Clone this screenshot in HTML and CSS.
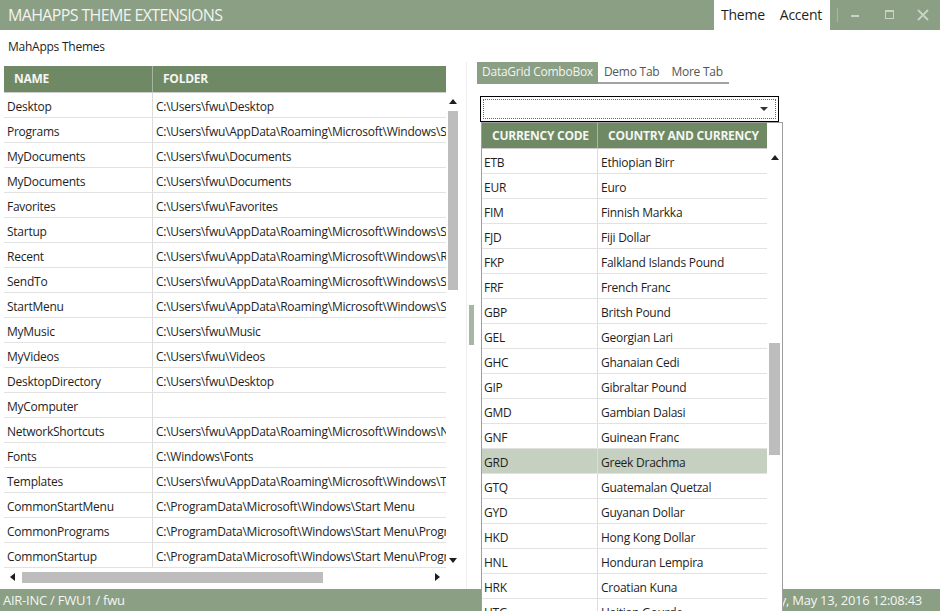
FILE: index.html
```html
<!DOCTYPE html>
<html>
<head>
<meta charset="utf-8">
<link rel="stylesheet" href="styles.css">
</head>
<body>
<div class="window">
  <div class="titlebar">
    <div class="title">MAHAPPS THEME EXTENSIONS</div>
    <div class="cmds"><span>Theme</span><span>Accent</span></div>
    <div class="sep"></div>
    <div class="wbtn"><svg width="12" height="12" viewBox="0 0 12 12"><rect x="2" y="6" width="8" height="2" fill="#c9d3c6"/></svg></div>
    <div class="wbtn"><svg width="12" height="12" viewBox="0 0 12 12"><rect x="2.5" y="1.5" width="8" height="8" fill="none" stroke="#c9d3c6" stroke-width="1"/><rect x="2" y="1" width="9" height="2" fill="#c9d3c6"/></svg></div>
    <div class="wbtn"><svg width="12" height="12" viewBox="0 0 12 12"><path d="M1 1 L11 11 M11 1 L1 11" stroke="#c9d3c6" stroke-width="1.8"/></svg></div>
  </div>
  <div class="content">
    <div class="subtitle">MahApps Themes</div>
    <div class="main">
      <div class="left">
        <div class="lhead">
          <div class="hc c1">NAME</div>
          <div class="hc c2">FOLDER</div>
        </div>
        <div class="lbody">
          <div class="lrows">
            <div class="row"><div class="c c1">Desktop</div><div class="c c2">C:\Users\fwu\Desktop</div></div>
            <div class="row"><div class="c c1">Programs</div><div class="c c2">C:\Users\fwu\AppData\Roaming\Microsoft\Windows\Start Menu\Programs</div></div>
            <div class="row"><div class="c c1">MyDocuments</div><div class="c c2">C:\Users\fwu\Documents</div></div>
            <div class="row"><div class="c c1">MyDocuments</div><div class="c c2">C:\Users\fwu\Documents</div></div>
            <div class="row"><div class="c c1">Favorites</div><div class="c c2">C:\Users\fwu\Favorites</div></div>
            <div class="row"><div class="c c1">Startup</div><div class="c c2">C:\Users\fwu\AppData\Roaming\Microsoft\Windows\Start Menu\Programs\Startup</div></div>
            <div class="row"><div class="c c1">Recent</div><div class="c c2">C:\Users\fwu\AppData\Roaming\Microsoft\Windows\Recent</div></div>
            <div class="row"><div class="c c1">SendTo</div><div class="c c2">C:\Users\fwu\AppData\Roaming\Microsoft\Windows\SendTo</div></div>
            <div class="row"><div class="c c1">StartMenu</div><div class="c c2">C:\Users\fwu\AppData\Roaming\Microsoft\Windows\Start Menu</div></div>
            <div class="row"><div class="c c1">MyMusic</div><div class="c c2">C:\Users\fwu\Music</div></div>
            <div class="row"><div class="c c1">MyVideos</div><div class="c c2">C:\Users\fwu\Videos</div></div>
            <div class="row"><div class="c c1">DesktopDirectory</div><div class="c c2">C:\Users\fwu\Desktop</div></div>
            <div class="row"><div class="c c1">MyComputer</div><div class="c c2"></div></div>
            <div class="row"><div class="c c1">NetworkShortcuts</div><div class="c c2">C:\Users\fwu\AppData\Roaming\Microsoft\Windows\Network Shortcuts</div></div>
            <div class="row"><div class="c c1">Fonts</div><div class="c c2">C:\Windows\Fonts</div></div>
            <div class="row"><div class="c c1">Templates</div><div class="c c2">C:\Users\fwu\AppData\Roaming\Microsoft\Windows\Templates</div></div>
            <div class="row"><div class="c c1">CommonStartMenu</div><div class="c c2">C:\ProgramData\Microsoft\Windows\Start Menu</div></div>
            <div class="row"><div class="c c1">CommonPrograms</div><div class="c c2">C:\ProgramData\Microsoft\Windows\Start Menu\Programs</div></div>
            <div class="row"><div class="c c1">CommonStartup</div><div class="c c2">C:\ProgramData\Microsoft\Windows\Start Menu\Programs\Startup</div></div>
          </div>
          <div class="vscroll">
            <div class="arrow up"></div>
            <div class="vthumb-wrap"><div class="vthumb"></div></div>
            <div class="arrow down"></div>
          </div>
        </div>
        <div class="hscroll">
          <div class="harrow hleft"></div>
          <div class="hthumb-wrap"><div class="hthumb"></div></div>
          <div class="harrow hright"></div>
        </div>
      </div>
      <div class="splitter"><div class="splitthumb"></div></div>
      <div class="right">
        <div class="tabs">
          <div class="tab active">DataGrid ComboBox</div>
          <div class="tab">Demo Tab</div>
          <div class="tab">More Tab</div>
        </div>
        <div class="combo">
          <div class="focus"><div class="carrow"></div></div>
        </div>
      </div>
    </div>
  </div>
  <div class="statusbar">
    <div>AIR-INC / FWU1 / fwu</div>
    <div>Friday, May 13, 2016 12:08:43</div>
  </div>
  <div class="popup">
    <div class="pgrid">
      <div class="phead">
        <div class="hc p1">CURRENCY CODE</div>
        <div class="hc p2">COUNTRY AND CURRENCY</div>
      </div>
      <div class="prow"><div class="c p1">ETB</div><div class="c p2">Ethiopian Birr</div></div>
      <div class="prow"><div class="c p1">EUR</div><div class="c p2">Euro</div></div>
      <div class="prow"><div class="c p1">FIM</div><div class="c p2">Finnish Markka</div></div>
      <div class="prow"><div class="c p1">FJD</div><div class="c p2">Fiji Dollar</div></div>
      <div class="prow"><div class="c p1">FKP</div><div class="c p2">Falkland Islands Pound</div></div>
      <div class="prow"><div class="c p1">FRF</div><div class="c p2">French Franc</div></div>
      <div class="prow"><div class="c p1">GBP</div><div class="c p2">Britsh Pound</div></div>
      <div class="prow"><div class="c p1">GEL</div><div class="c p2">Georgian Lari</div></div>
      <div class="prow"><div class="c p1">GHC</div><div class="c p2">Ghanaian Cedi</div></div>
      <div class="prow"><div class="c p1">GIP</div><div class="c p2">Gibraltar Pound</div></div>
      <div class="prow"><div class="c p1">GMD</div><div class="c p2">Gambian Dalasi</div></div>
      <div class="prow"><div class="c p1">GNF</div><div class="c p2">Guinean Franc</div></div>
      <div class="prow sel"><div class="c p1">GRD</div><div class="c p2">Greek Drachma</div></div>
      <div class="prow"><div class="c p1">GTQ</div><div class="c p2">Guatemalan Quetzal</div></div>
      <div class="prow"><div class="c p1">GYD</div><div class="c p2">Guyanan Dollar</div></div>
      <div class="prow"><div class="c p1">HKD</div><div class="c p2">Hong Kong Dollar</div></div>
      <div class="prow"><div class="c p1">HNL</div><div class="c p2">Honduran Lempira</div></div>
      <div class="prow"><div class="c p1">HRK</div><div class="c p2">Croatian Kuna</div></div>
      <div class="prow"><div class="c p1">HTG</div><div class="c p2">Haitian Gourde</div></div>
    </div>
    <div class="pscroll">
      <div class="arrow up"></div>
      <div class="pthumb"></div>
    </div>
  </div>
</div>
</body>
</html>
```

FILE: styles.css
```css
html, body {
  margin: 0;
  padding: 0;
}
body {
  width: 940px;
  height: 611px;
  overflow: hidden;
  font-family: "Open Sans", "Noto Sans", sans-serif;
  font-size: 12px;
  letter-spacing: -0.25px;
  color: #1e1e1e;
  background: #fff;
}
.window {
  position: relative;
  width: 940px;
  height: 611px;
  display: flex;
  flex-direction: column;
  overflow: hidden;
}
.titlebar {
  height: 30px;
  flex: none;
  background: #8a9f84;
  display: flex;
  align-items: stretch;
}
.title {
  flex: 1;
  padding-left: 8px;
  font-size: 16px;
  line-height: 30px;
  color: #f1f4f0;
  letter-spacing: -0.65px;
}
.cmds {
  background: #fff;
  display: flex;
  gap: 15px;
  padding: 0 8px 0 7px;
  font-size: 14px;
  line-height: 30px;
  color: #1e1e1e;
  margin-right: 7px;
}
.sep {
  width: 1px;
  background: #a9b8a4;
  margin: 8px 0;
}
.wbtn {
  width: 34px;
  display: flex;
  align-items: center;
  justify-content: center;
}
.content {
  flex: 1;
  display: flex;
  flex-direction: column;
  min-height: 0;
}
.subtitle {
  height: 32px;
  line-height: 33px;
  padding-left: 8px;
  flex: none;
}
.main {
  flex: 1;
  display: flex;
  min-height: 0;
}
.left {
  width: 460px;
  padding: 4px 0 0 4px;
  box-sizing: border-box;
  flex: none;
  display: flex;
  flex-direction: column;
}
.lhead {
  width: 442px;
  height: 27px;
  flex: none;
  display: flex;
  background: #6e8964;
  border-bottom: 1px solid #ccc;
  box-sizing: border-box;
}
.hc {
  color: #f4f6f3;
  font-weight: 700;
  line-height: 25px;
  padding-left: 10px;
  box-sizing: border-box;
  white-space: nowrap;
}
.lhead .c1 {
  width: 149px;
  border-right: 1px solid #a7b6a1;
}
.lhead .c2 {
  flex: 1;
}
.lbody {
  display: flex;
  height: 475px;
  flex: none;
}
.lrows {
  width: 442px;
  overflow: hidden;
}
.row, .prow {
  height: 25px;
  display: flex;
  border-bottom: 1px solid #e2e2e2;
  box-sizing: border-box;
}
.c {
  padding-top: 3px;
  line-height: 21px;
  white-space: nowrap;
  overflow: hidden;
  box-sizing: border-box;
}
.row .c1 {
  width: 149px;
  flex: none;
  padding-left: 3px;
  border-right: 1px solid #dcdcdc;
}
.row .c2 {
  flex: 1;
  padding-left: 3px;
}
.vscroll {
  width: 14px;
  height: 475px;
  display: flex;
  flex-direction: column;
  align-items: center;
}
.arrow {
  width: 0;
  height: 0;
  flex: none;
  border-left: 4px solid transparent;
  border-right: 4px solid transparent;
}
.arrow.up {
  border-bottom: 5px solid #1e1e1e;
  margin-top: 6px;
}
.arrow.down {
  border-top: 5px solid #1e1e1e;
  margin-top: 4px;
}
.vthumb-wrap {
  height: 443px;
  width: 10px;
  margin-top: 7px;
  flex: none;
}
.vthumb {
  height: 179px;
  background: #bdbdbd;
}
.hscroll {
  width: 442px;
  height: 18px;
  flex: none;
  display: flex;
  align-items: center;
}
.harrow {
  width: 0;
  height: 0;
  border-top: 4px solid transparent;
  border-bottom: 4px solid transparent;
}
.hleft {
  border-right: 5px solid #1e1e1e;
  margin-left: 6px;
}
.hright {
  border-left: 5px solid #1e1e1e;
  margin-right: 6px;
}
.hthumb-wrap {
  flex: 1;
  height: 11px;
  margin: 0 4px 0 7px;
}
.hthumb {
  width: 301px;
  height: 11px;
  background: #bdbdbd;
}
.splitter {
  width: 17px;
  flex: none;
  display: flex;
  justify-content: center;
  box-sizing: border-box;
  background: linear-gradient(to right, #fff 0, #fff 6px, #efefef 6px, #efefef 7px, #fff 7px);
}
.splitthumb {
  width: 5px;
  height: 40px;
  margin-top: 243px;
  margin-left: 5px;
  background: #a8b7a3;
}
.right {
  flex: 1;
  display: flex;
  flex-direction: column;
  align-items: flex-start;
}
.tabs {
  display: flex;
  border-bottom: 2px solid #a3a3a3;
  height: 20px;
}
.tab {
  padding: 0 6px;
  line-height: 20px;
  color: #555;
  font-size: 12px;
  white-space: nowrap;
}
.tab.active {
  background: #8a9f84;
  color: #f2f5f1;
  padding: 0 5px;
  box-shadow: 0 2px 0 #8a9f84;
}
.combo {
  margin-top: 12px;
  margin-left: 3px;
  width: 299px;
  height: 26px;
  border: 1px solid #000;
  box-sizing: border-box;
  padding: 2px;
}
.focus {
  height: 100%;
  border: 1px dotted #666;
  box-sizing: border-box;
  display: flex;
  justify-content: flex-end;
  align-items: center;
  padding-right: 7px;
}
.carrow {
  width: 0;
  height: 0;
  border-left: 4px solid transparent;
  border-right: 4px solid transparent;
  border-top: 4px solid #333;
}
.statusbar {
  height: 22px;
  flex: none;
  background: #8a9f84;
  color: #f4f6f3;
  font-size: 13px;
  line-height: 22px;
  display: flex;
  justify-content: space-between;
  padding: 0 18px 0 3px;
}
.popup {
  position: absolute;
  left: 481px;
  top: 122px;
  width: 302px;
  height: 520px;
  background: #fff;
  border: 1px solid #9e9e9e;
  box-sizing: border-box;
  display: flex;
}
.pgrid {
  width: 285px;
}
.phead {
  height: 26px;
  display: flex;
  background: #6e8964;
  border-bottom: 1px solid #ccc;
  box-sizing: border-box;
}
.phead .hc {
  line-height: 25px;
}
.phead .p1 {
  width: 116px;
  border-right: 1px solid #a7b6a1;
}
.phead .p2 {
  flex: 1;
}
.prow .p1 {
  width: 116px;
  padding-left: 2px;
  border-right: 1px solid #dcdcdc;
}
.prow .p2 {
  flex: 1;
  padding-left: 3px;
}
.prow.sel {
  background: #c5d0c1;
}
.pscroll {
  width: 15px;
  display: flex;
  flex-direction: column;
  align-items: center;
  padding-top: 26px;
}
.pthumb {
  width: 11px;
  height: 112px;
  margin-top: 183px;
  background: #bdbdbd;
  flex: none;
}
```
